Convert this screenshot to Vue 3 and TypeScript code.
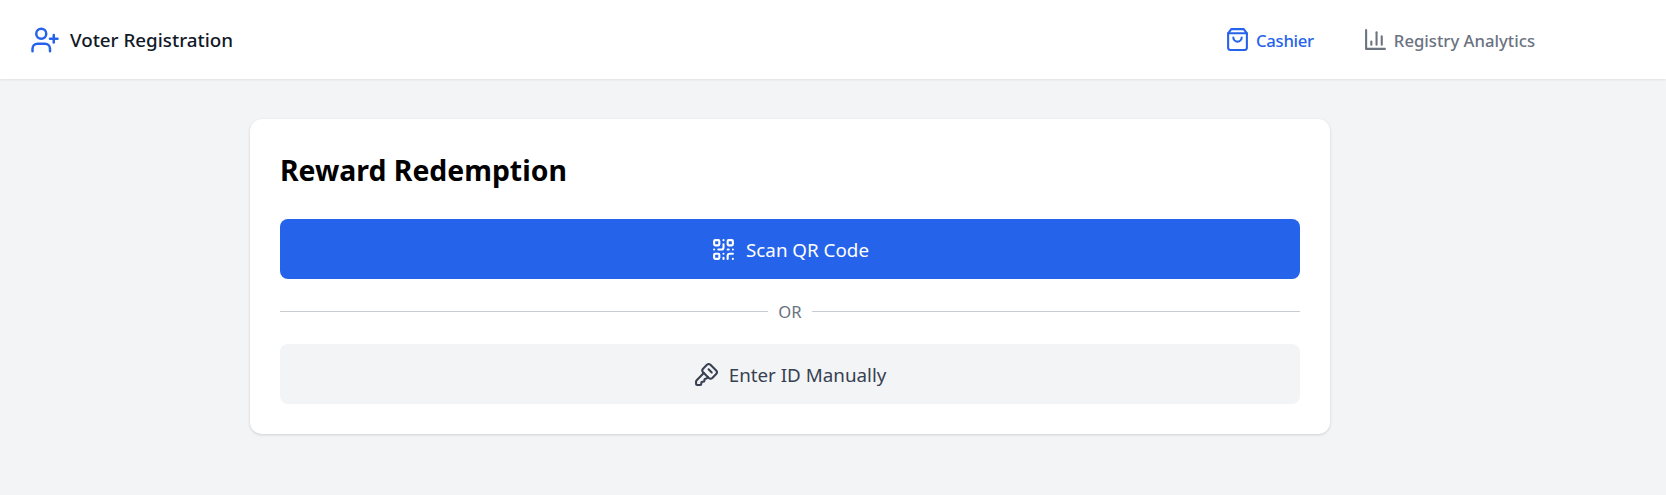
<script setup lang="ts">
</script>

<template>
  <div class="page">
    <header class="topbar">
      <div class="brand">
        <svg class="brand-icon" viewBox="0 0 24 24"><path d="M16 21v-2a4 4 0 0 0-4-4H6a4 4 0 0 0-4 4v2" /><circle cx="9" cy="7" r="4" /><path d="M19 8v6" /><path d="M22 11h-6" /></svg>
        <span>Voter Registration</span>
      </div>
      <nav class="nav">
        <a class="nav-item active">
          <svg class="nav-icon" viewBox="0 0 24 24"><path d="M6 2 3 6v14a2 2 0 0 0 2 2h14a2 2 0 0 0 2-2V6l-3-4Z" /><path d="M3 6h18" /><path d="M16 10a4 4 0 0 1-8 0" /></svg>
          <span class="label">Cashier</span>
        </a>
        <a class="nav-item">
          <svg class="nav-icon" viewBox="0 0 24 24"><path d="M3 3v18h18" /><path d="M18 17V9" /><path d="M13 17V5" /><path d="M8 17v-3" /></svg>
          <span class="label">Registry Analytics</span>
        </a>
      </nav>
    </header>
    <main class="content">
      <section class="card">
        <h1>Reward Redemption</h1>
        <button class="btn primary">
          <svg class="btn-icon" viewBox="0 0 24 24"><rect x="3" y="3" width="5" height="5" rx="1" /><rect x="16" y="3" width="5" height="5" rx="1" /><rect x="3" y="16" width="5" height="5" rx="1" /><path d="M21 16h-3a2 2 0 0 0-2 2v3" /><path d="M21 21v.01" /><path d="M12 7v3a2 2 0 0 1-2 2H7" /><path d="M3 12h.01" /><path d="M12 3h.01" /><path d="M12 16v.01" /><path d="M16 12h1" /><path d="M21 12v.01" /><path d="M12 21v-1" /></svg>
          <span class="label">Scan QR Code</span>
        </button>
        <div class="divider"><span class="label">OR</span></div>
        <button class="btn secondary">
          <svg class="btn-icon" viewBox="0 0 24 24"><path d="M12.4 2.7a2.5 2.5 0 0 1 3.4 0l5.5 5.5a2.5 2.5 0 0 1 0 3.4l-3.7 3.7a2.5 2.5 0 0 1-3.4 0L8.7 9.8a2.5 2.5 0 0 1 0-3.4z" /><path d="m14 7 3 3" /><path d="m9.4 10.6-6.814 6.814A2 2 0 0 0 2 18.828V21a1 1 0 0 0 1 1h3a1 1 0 0 0 1-1v-1a1 1 0 0 1 1-1h1a1 1 0 0 0 1-1v-1a1 1 0 0 1 1-1h.172a2 2 0 0 0 1.414-.586l.814-.814" /></svg>
          <span class="label">Enter ID Manually</span>
        </button>
      </section>
    </main>
  </div>
</template>

<style>
html,
body {
  margin: 0;
  background: #f3f4f6;
}
</style>

<style scoped>
.page {
  min-height: 495px;
  background: #f3f4f6;
  font-family: "Noto Sans", sans-serif;
}

svg {
  fill: none;
  stroke: currentColor;
  stroke-width: 2;
  stroke-linecap: round;
  stroke-linejoin: round;
}

.label {
  padding-top: 2px;
}

.topbar {
  display: flex;
  align-items: center;
  justify-content: space-between;
  height: 79px;
  padding: 0 131px 0 30px;
  background: #fff;
  box-shadow: 0 1px 2px rgba(0, 0, 0, 0.08);
}

.brand {
  display: flex;
  align-items: center;
  gap: 10px;
  font-size: 18.8px;
  font-weight: 500;
  color: #111827;
}

.brand-icon {
  width: 30px;
  height: 30px;
  color: #2563eb;
}

.nav {
  display: flex;
  gap: 49px;
}

.nav-item {
  display: flex;
  align-items: center;
  gap: 6px;
  font-size: 16.7px;
  font-weight: 500;
  color: #6b7280;
}

.nav-item.active {
  color: #2563eb;
  letter-spacing: -0.3px;
}

.nav-icon {
  width: 25px;
  height: 25px;
}

.content {
  display: flex;
  justify-content: center;
  padding: 40px 86px 0 0;
}

.card {
  width: 1020px;
  padding: 30px;
  background: #fff;
  border-radius: 12px;
  box-shadow: 0 1px 3px rgba(0, 0, 0, 0.15);
}

h1 {
  margin: 0 0 28px;
  font-size: 28.4px;
  line-height: 42px;
  font-weight: 700;
  color: #000;
}

.btn {
  display: flex;
  align-items: center;
  justify-content: center;
  gap: 10px;
  width: 100%;
  height: 60px;
  border: none;
  border-radius: 8px;
  font-family: inherit;
  font-size: 18.8px;
}

.primary {
  background: #2563eb;
  color: #fff;
}

.secondary {
  background: #f3f4f6;
  color: #374151;
}

.btn-icon {
  width: 25px;
  height: 25px;
}

.divider {
  display: flex;
  align-items: center;
  gap: 10px;
  height: 22px;
  margin: 21px 0 22px;
  font-size: 16.6px;
  line-height: 22px;
  color: #6b7280;
}

.divider::before,
.divider::after {
  content: "";
  flex: 1;
  height: 1px;
  margin-top: 1px;
  background: #c8ccd3;
}
</style>
